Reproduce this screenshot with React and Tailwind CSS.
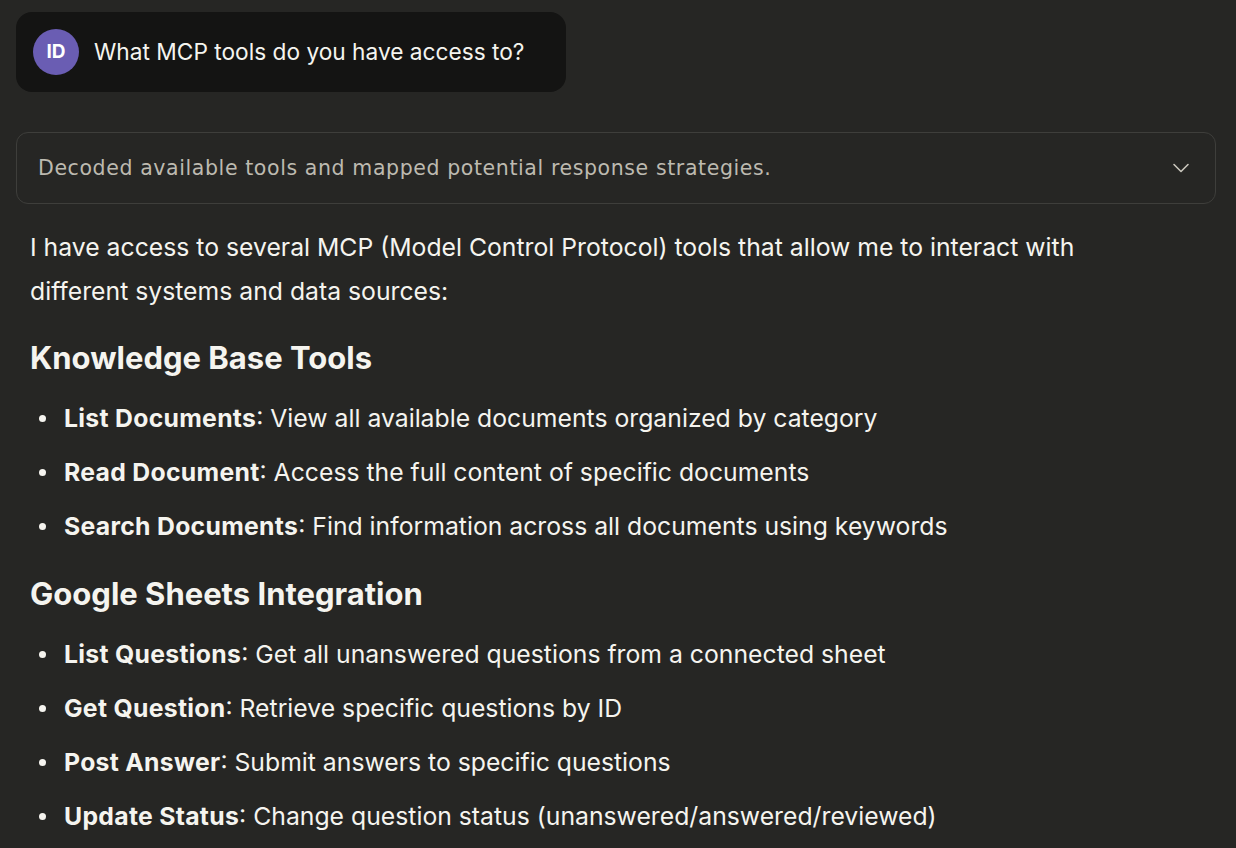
import React from "react";

const Bullet = ({ term, text }) => (
  <li className="flex items-start">
    <span className="w-[34px] flex justify-start shrink-0 pt-[19px] pl-[9px]">
      <span className="block w-[7px] h-[7px] rounded-full bg-[#f5f4ef]" />
    </span>
    <span>
      <strong className="font-bold tracking-[0.3px]">{term}</strong>: {text}
    </span>
  </li>
);

export default function App() {
  return (
    <div
      className="w-[1236px] h-[848px] overflow-hidden bg-[#262624] text-[#f5f4ef]"
      style={{ fontFamily: "Inter, 'Noto Sans', sans-serif" }}
    >
      <div className="pt-[12px] pl-[16px] pr-[20px]">
        <div className="inline-flex items-center h-[80px] w-[550px] rounded-[16px] bg-[#141413] pl-[17px] gap-[15px]">
          <div className="w-[46px] h-[46px] rounded-full bg-[#6a5db3] flex items-center justify-center text-[19px] font-bold text-white">
            ID
          </div>
          <div className="text-[22.7px] text-[#f5f4ef]">What MCP tools do you have access to?</div>
        </div>

        <div className="mt-[40px] h-[72px] rounded-[12px] border border-[#3e3e3b] flex items-center justify-between pl-[21px] pr-[24px]">
          <div
            className="text-[20.5px] text-[#bdbab0]"
            style={{ fontFamily: "'DejaVu Sans', sans-serif", letterSpacing: "0.6px" }}
          >
            Decoded available tools and mapped potential response strategies.
          </div>
          <svg width="20" height="20" viewBox="0 0 20 20" fill="none">
            <path d="M3 6.5 L10 13.5 L17 6.5" stroke="#c9c6bc" strokeWidth="1.6" strokeLinecap="round" strokeLinejoin="round" />
          </svg>
        </div>

        <div className="px-[14px] text-[24.75px] leading-[44px]">
          <p className="mt-[21px]">
            I have access to several MCP (Model Control Protocol) tools that allow me to interact with
            <br />
            different systems and data sources:
          </p>
          <h2 className="mt-[25px] text-[31px] leading-[40px] font-bold">Knowledge Base Tools</h2>
          <ul className="mt-[18px] flex flex-col gap-[10px]">
            <Bullet term="List Documents" text="View all available documents organized by category" />
            <Bullet term="Read Document" text="Access the full content of specific documents" />
            <Bullet term="Search Documents" text="Find information across all documents using keywords" />
          </ul>
          <h2 className="mt-[26px] text-[31px] leading-[40px] font-bold">Google Sheets Integration</h2>
          <ul className="mt-[18px] flex flex-col gap-[10px]">
            <Bullet term="List Questions" text="Get all unanswered questions from a connected sheet" />
            <Bullet term="Get Question" text="Retrieve specific questions by ID" />
            <Bullet term="Post Answer" text="Submit answers to specific questions" />
            <Bullet term="Update Status" text="Change question status (unanswered/answered/reviewed)" />
          </ul>
        </div>
      </div>
    </div>
  );
}
